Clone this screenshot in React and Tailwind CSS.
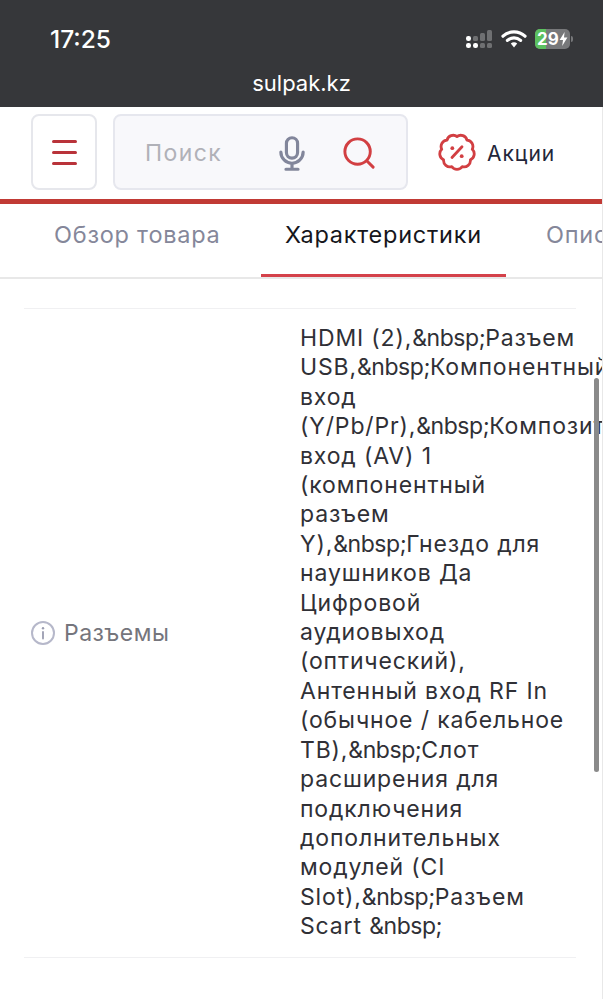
import React from "react";

const LINES = [
  "HDMI (2),&nbsp;Разъем",
  "USB,&nbsp;Компонентный",
  "вход",
  "(Y/Pb/Pr),&nbsp;Композитный",
  "вход (AV) 1",
  "(компонентный",
  "разъем",
  "Y),&nbsp;Гнездо для",
  "наушников Да",
  "Цифровой",
  "аудиовыход",
  "(оптический),",
  "Антенный вход RF In",
  "(обычное / кабельное",
  "ТВ),&nbsp;Слот",
  "расширения для",
  "подключения",
  "дополнительных",
  "модулей (CI",
  "Slot),&nbsp;Разъем",
  "Scart &nbsp;",
];

function scallop(cx, cy, r, n) {
  let d = "";
  for (let i = 0; i <= n; i++) {
    const a = (i / n) * Math.PI * 2 - Math.PI / 2;
    const x = (cx + r * Math.cos(a)).toFixed(2);
    const y = (cy + r * Math.sin(a)).toFixed(2);
    d += i === 0 ? `M${x} ${y}` : `A6.4 6.4 0 0 1 ${x} ${y}`;
  }
  return d + "Z";
}

function Line({ text }) {
  const parts = text.split("&nbsp;");
  return (
    <div className="whitespace-nowrap">
      {parts.map((p, i) => (
        <React.Fragment key={i}>
          {i > 0 && <span className="tracking-[-0.45px]">{"&nbsp;"}</span>}
          {p}
        </React.Fragment>
      ))}
    </div>
  );
}

function StatusIcons() {
  return (
    <div className="flex items-center">
      <svg width="28" height="20" viewBox="0 0 28 20" className="mr-[8px]">
        <rect x="1" y="7" width="5" height="5" rx="2.2" fill="#fff" />
        <rect x="1" y="14" width="5" height="5" rx="2.2" fill="#fff" />
        <rect x="8" y="14" width="5" height="5" rx="2.2" fill="#fff" />
        <rect x="8" y="7" width="5" height="5" rx="1.5" fill="#6f7072" />
        <rect x="15" y="4" width="5" height="8" rx="1.5" fill="#6f7072" />
        <rect x="15" y="14" width="5" height="5" rx="1.5" fill="#6f7072" />
        <rect x="22" y="1" width="5" height="11" rx="1.5" fill="#6f7072" />
        <rect x="22" y="14" width="5" height="5" rx="1.5" fill="#6f7072" />
      </svg>
      <svg width="26" height="20" viewBox="0 0 26 20" fill="none" className="mr-[8px]">
        <path d="M2 7.2C8.2 1.4 17.8 1.4 24 7.2" stroke="#fff" strokeWidth="3.2" strokeLinecap="round" />
        <path d="M6.4 11.4C10.3 7.9 15.7 7.9 19.6 11.4" stroke="#fff" strokeWidth="3.2" strokeLinecap="round" />
        <path d="M9.8 14.6C11.6 12.9 14.4 12.9 16.2 14.6L13 18.4Z" fill="#fff" />
      </svg>
      <div className="relative flex h-[20px] w-[35px] items-center overflow-hidden rounded-[5px] bg-[#77787a]">
        <div className="h-full w-[11px] bg-[#5cc05f]" />
        <span className="absolute left-[2px] top-0 text-[17px] font-bold leading-[20px] text-white">29</span>
        <svg width="9" height="14" viewBox="0 0 9 14" className="absolute right-[2px] top-[3px]">
          <path d="M5.6 0 0.6 8H4L3.2 14 8.4 5.6H5Z" fill="#fff" />
        </svg>
      </div>
      <div className="ml-[1px] h-[6px] w-[2px] rounded-r-full bg-[#77787a]" />
    </div>
  );
}

export default function App() {
  return (
    <div
      className="relative h-[999px] w-[603px] overflow-hidden bg-white"
      style={{ fontFamily: '"Inter", "Liberation Sans", sans-serif' }}
    >
      <div className="flex h-[107px] flex-col bg-[#36373a] text-white">
        <div className="flex h-[78px] shrink-0 items-center justify-between pl-[50px] pr-[30px]">
          <span className="text-[24.5px] font-medium leading-none">17:25</span>
          <StatusIcons />
        </div>
        <div className="-mt-[6px] text-center text-[22px] leading-none">sulpak.kz</div>
      </div>

      <div className="flex h-[92px] items-center pb-[2px] pl-[31px]">
        <button className="flex h-[76px] w-[66px] flex-col items-center justify-center gap-[8px] rounded-[8px] border-2 border-[#e6e7ec]">
          <span className="h-[3px] w-[25px] rounded-full bg-[#b9333a]" />
          <span className="h-[3px] w-[25px] rounded-full bg-[#b9333a]" />
          <span className="h-[3px] w-[25px] rounded-full bg-[#b9333a]" />
        </button>
        <div className="ml-[16px] flex h-[76px] w-[295px] items-center rounded-[8px] border-2 border-[#e6e7ee] bg-[#f8f8fb] pl-[30px]">
          <span className="w-[134px] pt-[2px] text-[23px] tracking-[1.4px] text-[#b0b1b8]">Поиск</span>
          <svg width="26" height="37" viewBox="0 0 28 38" fill="none" stroke="#82869b" strokeWidth="3.4" strokeLinecap="round" className="mt-[2px]">
            <rect x="8" y="2" width="12" height="22" rx="6" />
            <path d="M2 17.5a12 12 0 0 0 24 0" />
            <path d="M14 30v6M7.5 36h13" />
          </svg>
          <svg width="32" height="32" viewBox="0 0 34 34" fill="none" stroke="#d23f42" strokeWidth="3.1" strokeLinecap="round" className="ml-[38px] mt-[2px]">
            <circle cx="15.5" cy="15.5" r="13.5" />
            <path d="M25.5 25.5l6.5 6.5" />
          </svg>
        </div>
        <svg width="38" height="38" viewBox="0 0 38 38" fill="none" className="ml-[30px]">
          <path d={scallop(19, 19, 15.5, 9)} stroke="#d23f42" strokeWidth="2.8" strokeLinejoin="round" />
          <path d="M14 24.5L24 13.8" stroke="#d23f42" strokeWidth="2.8" strokeLinecap="round" />
          <circle cx="14.3" cy="15.2" r="1.9" fill="#d23f42" />
          <circle cx="23.7" cy="23.2" r="1.9" fill="#d23f42" />
        </svg>
        <span className="ml-[11px] pt-[3px] text-[21px] tracking-[1px] text-[#23263a]">Акции</span>
      </div>

      <div className="h-[5px] bg-[#c13a35]" />

      <div className="flex h-[75px] items-stretch overflow-hidden border-b-2 border-[#e8e8e8] bg-white pl-[54px] text-[23.5px] tracking-[0.75px]">
        <div className="flex w-[207px] shrink-0 items-center pb-[12px] text-[#85879a]">Обзор товара</div>
        <div className="relative flex w-[245px] shrink-0 items-center justify-center pb-[12px] text-[#16161c]">
          Характеристики
          <span className="absolute inset-x-0 bottom-0 h-[3px] bg-[#d4414a]" />
        </div>
        <div className="ml-[40px] flex shrink-0 items-center pb-[12px] text-[#85879a]">Описание</div>
      </div>

      <div className="ml-[24px] mr-[27px] mt-[29px] flex border-y border-[#f0f0f2] py-[15px]">
        <div className="flex w-[276px] shrink-0 items-center gap-[9px] pl-[7px] text-[#75757c]">
          <svg width="24" height="24" viewBox="0 0 24 24" fill="none">
            <circle cx="12" cy="12" r="11" stroke="#b6b8ca" strokeWidth="2" />
            <path d="M12 11v6.5" stroke="#9a9cb0" strokeWidth="1.8" strokeLinecap="round" />
            <circle cx="12" cy="7.3" r="1.2" fill="#9a9cb0" />
          </svg>
          <span className="text-[23px] tracking-[0.5px]">Разъемы</span>
        </div>
        <div className="text-[23px] leading-[29.4px] tracking-[0.85px] text-[#303036]">
          {LINES.map((l) => (
            <Line key={l} text={l} />
          ))}
        </div>
      </div>

      <div className="absolute right-[4px] top-[378px] h-[394px] w-[5px] rounded-full bg-[#8a8a8a]" />
      <div className="absolute right-0 top-[107px] h-[892px] w-px bg-[#e8e8e8]" />
    </div>
  );
}
